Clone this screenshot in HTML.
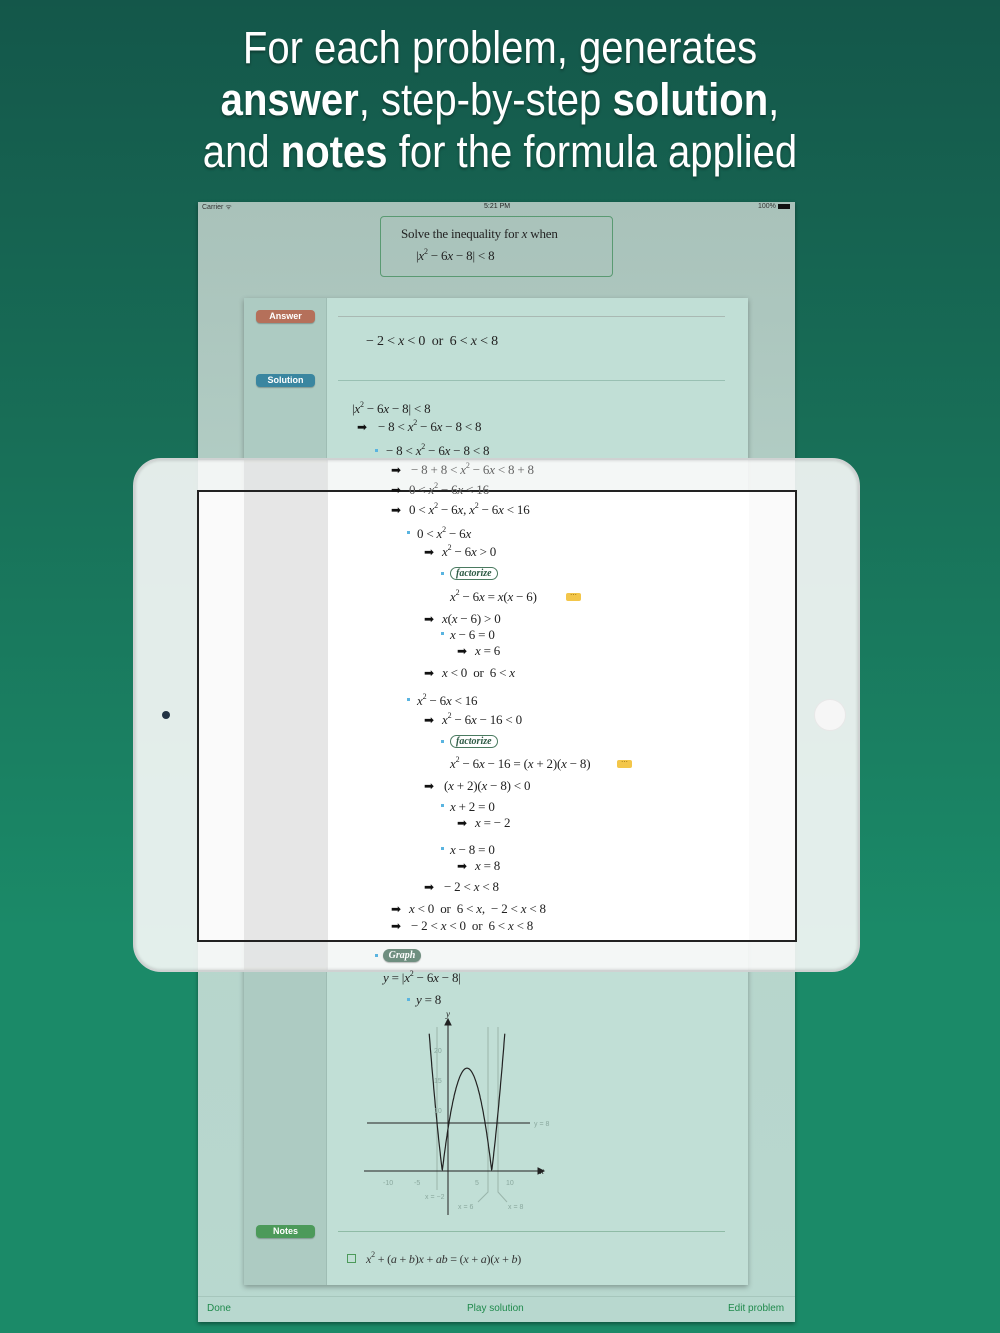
<!DOCTYPE html>
<html><head><meta charset="utf-8"><style>
*{margin:0;padding:0;box-sizing:border-box}
body{width:1000px;height:1333px;overflow:hidden;position:relative;background:linear-gradient(180deg,#14574a 0%,#187058 35%,#1b8a68 70%,#1b8a68 100%);font-family:"Liberation Serif",serif}
.h{position:absolute;left:0;width:1000px;text-align:center;color:#fff;font-family:"Liberation Sans",sans-serif;font-size:45px;line-height:52px;text-shadow:0 2px 3px rgba(0,0,0,.35);transform:scaleX(0.89);transform-origin:500px 0}
.h b{font-weight:bold}
.a{position:absolute;white-space:nowrap}
.t{position:absolute;white-space:nowrap;font-size:13px;color:#222;line-height:16px;letter-spacing:-0.2px}
.t i{font-style:italic}
.t sup{font-size:8px;vertical-align:6px;line-height:0}
.ar{position:absolute;font-size:12px;color:#111;line-height:16px}
.bu{position:absolute;width:3px;height:3px;background:#5ab4e0}
.pill{position:absolute;border-radius:4px;color:#fff;font-family:"Liberation Sans",sans-serif;font-weight:bold;font-size:9px;text-align:center;line-height:13px;box-shadow:0 1px 1px rgba(0,0,0,.25)}
.fac{position:absolute;height:13px;border:1px solid #4a7a60;border-radius:7px;font-style:italic;font-weight:bold;font-size:10px;color:#2d5a44;line-height:11px;padding:0 5px}
.dots{position:absolute;width:15px;height:8px;background:#f3c64a;border-radius:2px;font-size:7px;color:#7a5a00;text-align:center;line-height:5px}
.ui{font-family:"Liberation Sans",sans-serif}
</style></head><body>
<div class="h" style="top:22px">For each problem, generates</div>
<div class="h" style="top:74px"><b>answer</b>, step-by-step <b>solution</b>,</div>
<div class="h" style="top:126px">and <b>notes</b> for the formula applied</div>

<!-- screen -->
<div class="a" style="left:198px;top:202px;width:597px;height:1120px;background:linear-gradient(180deg,#a9c2ba 0%,#b6d3ca 40%,#b8d8cf 100%);box-shadow:0 2px 4px rgba(0,0,0,.4)"></div>
<div class="a ui" style="left:202px;top:203px;font-size:7px;color:#333">Carrier ᯤ</div>
<div class="a ui" style="left:484px;top:203px;font-size:7px;color:#222">5:21 PM</div>
<div class="a ui" style="left:758px;top:203px;font-size:7px;color:#333">100% <span style="display:inline-block;width:12px;height:5px;background:#111;vertical-align:middle"></span></div>
<div class="a" style="left:380px;top:216px;width:233px;height:61px;border:1px solid #5a9a72;border-radius:4px"></div>
<div class="t" style="left:401px;top:226px;font-size:13px">Solve the inequality for <i>x</i> when</div>
<div class="t" style="left:416px;top:248px;font-size:13px">|<i>x</i><sup>2</sup> − 6<i>x</i> − 8| &lt; 8</div>

<!-- card -->
<div class="a" style="left:244px;top:298px;width:504px;height:987px;background:#c1dfd6;box-shadow:0 2px 5px rgba(0,0,0,.3)"></div>
<div class="a" style="left:244px;top:298px;width:83px;height:987px;background:#adcbc2;border-right:1px solid #9fbdb4"></div>
<div class="pill" style="left:256px;top:310px;width:59px;background:#b5705a">Answer</div>
<div class="pill" style="left:256px;top:374px;width:59px;background:#3a86a0">Solution</div>
<div class="pill" style="left:256px;top:1225px;width:59px;background:#4c9a5a">Notes</div>
<div class="a" style="left:338px;top:316px;width:387px;height:1px;background:#a9b9b3"></div>
<div class="a" style="left:338px;top:380px;width:387px;height:1px;background:#99c0b3"></div>
<div class="a" style="left:338px;top:1231px;width:387px;height:1px;background:#8fbba6"></div>
<div class="t" style="left:366px;top:334px;font-size:14px">− 2 &lt; <i>x</i> &lt; 0 &nbsp;or &nbsp;6 &lt; <i>x</i> &lt; 8</div>
<div class="a" style="left:347px;top:1254px;width:9px;height:9px;border:1px solid #4c9a5a"></div>
<div class="t" style="left:366px;top:1251px;font-size:12px;color:#333"><i>x</i><sup>2</sup> + (<i>a</i> + <i>b</i>)<i>x</i> + <i>ab</i> = (<i>x</i> + <i>a</i>)(<i>x</i> + <i>b</i>)</div>
<div class="a" style="left:198px;top:1296px;width:597px;height:1px;background:#a6c6bc"></div>
<div class="a ui" style="left:207px;top:1303px;font-size:10px;color:#1f8a4c">Done</div>
<div class="a ui" style="left:467px;top:1303px;font-size:10px;color:#1f8a4c">Play solution</div>
<div class="a ui" style="left:728px;top:1303px;font-size:10px;color:#1f8a4c">Edit problem</div>

<!-- iPad overlay -->
<div class="a" style="left:133px;top:458px;width:727px;height:514px;border-radius:28px;background:rgba(250,250,250,.9);border:2px solid #cfd2d2;box-shadow:inset 0 0 3px rgba(0,0,0,.2)"></div>
<div class="a" style="left:244px;top:460px;width:84px;height:510px;background:rgba(200,200,200,.35)"></div>
<div class="a" style="left:197px;top:490px;width:600px;height:452px;background:#fff;border:2px solid #222"></div>
<div class="a" style="left:199px;top:492px;width:45px;height:448px;background:#fafafa"></div>
<div class="a" style="left:244px;top:492px;width:84px;height:448px;background:#e6e6e6"></div>
<div class="a" style="left:749px;top:492px;width:46px;height:448px;background:#fafafa"></div>
<div class="a" style="left:162px;top:711px;width:8px;height:8px;border-radius:50%;background:#223344"></div>
<div class="a" style="left:814px;top:699px;width:32px;height:32px;border-radius:50%;border:1px solid #e8e8e8;background:#f6f6f6"></div>

<!-- solution lines -->
<div class="t" style="left:352px;top:401px">|<i>x</i><sup>2</sup> − 6<i>x</i> − 8| &lt; 8</div>
<div class="ar" style="left:357px;top:419px">➡</div><div class="t" style="left:378px;top:419px">− 8 &lt; <i>x</i><sup>2</sup> − 6<i>x</i> − 8 &lt; 8</div>
<div class="bu" style="left:375px;top:449px"></div><div class="t" style="left:386px;top:443px">− 8 &lt; <i>x</i><sup>2</sup> − 6<i>x</i> − 8 &lt; 8</div>
<div class="ar" style="left:391px;top:462px">➡</div><div class="t" style="left:411px;top:462px;color:#666">− 8 + 8 &lt; <i>x</i><sup>2</sup> − 6<i>x</i> &lt; 8 + 8</div>
<div class="ar" style="left:391px;top:482px">➡</div><div class="t" style="left:409px;top:482px;color:#555">0 &lt; <i>x</i><sup>2</sup> − 6<i>x</i> &lt; 16</div>
<div class="ar" style="left:391px;top:502px">➡</div><div class="t" style="left:409px;top:502px">0 &lt; <i>x</i><sup>2</sup> − 6<i>x</i>, <i>x</i><sup>2</sup> − 6<i>x</i> &lt; 16</div>
<div class="bu" style="left:407px;top:531px"></div><div class="t" style="left:417px;top:526px">0 &lt; <i>x</i><sup>2</sup> − 6<i>x</i></div>
<div class="ar" style="left:424px;top:544px">➡</div><div class="t" style="left:442px;top:544px"><i>x</i><sup>2</sup> − 6<i>x</i> &gt; 0</div>
<div class="bu" style="left:441px;top:572px"></div><div class="fac" style="left:450px;top:567px">factorize</div>
<div class="t" style="left:450px;top:589px"><i>x</i><sup>2</sup> − 6<i>x</i> = <i>x</i>(<i>x</i> − 6)</div><div class="dots" style="left:566px;top:593px">···</div>
<div class="ar" style="left:424px;top:611px">➡</div><div class="t" style="left:442px;top:611px"><i>x</i>(<i>x</i> − 6) &gt; 0</div>
<div class="bu" style="left:441px;top:632px"></div><div class="t" style="left:450px;top:627px"><i>x</i> − 6 = 0</div>
<div class="ar" style="left:457px;top:643px">➡</div><div class="t" style="left:475px;top:643px"><i>x</i> = 6</div>
<div class="ar" style="left:424px;top:665px">➡</div><div class="t" style="left:442px;top:665px"><i>x</i> &lt; 0 &nbsp;or &nbsp;6 &lt; <i>x</i></div>
<div class="bu" style="left:407px;top:698px"></div><div class="t" style="left:417px;top:693px"><i>x</i><sup>2</sup> − 6<i>x</i> &lt; 16</div>
<div class="ar" style="left:424px;top:712px">➡</div><div class="t" style="left:442px;top:712px"><i>x</i><sup>2</sup> − 6<i>x</i> − 16 &lt; 0</div>
<div class="bu" style="left:441px;top:740px"></div><div class="fac" style="left:450px;top:735px">factorize</div>
<div class="t" style="left:450px;top:756px"><i>x</i><sup>2</sup> − 6<i>x</i> − 16 = (<i>x</i> + 2)(<i>x</i> − 8)</div><div class="dots" style="left:617px;top:760px">···</div>
<div class="ar" style="left:424px;top:778px">➡</div><div class="t" style="left:444px;top:778px">(<i>x</i> + 2)(<i>x</i> − 8) &lt; 0</div>
<div class="bu" style="left:441px;top:804px"></div><div class="t" style="left:450px;top:799px"><i>x</i> + 2 = 0</div>
<div class="ar" style="left:457px;top:815px">➡</div><div class="t" style="left:475px;top:815px"><i>x</i> = − 2</div>
<div class="bu" style="left:441px;top:847px"></div><div class="t" style="left:450px;top:842px"><i>x</i> − 8 = 0</div>
<div class="ar" style="left:457px;top:858px">➡</div><div class="t" style="left:475px;top:858px"><i>x</i> = 8</div>
<div class="ar" style="left:424px;top:879px">➡</div><div class="t" style="left:444px;top:879px">− 2 &lt; <i>x</i> &lt; 8</div>
<div class="ar" style="left:391px;top:901px">➡</div><div class="t" style="left:409px;top:901px"><i>x</i> &lt; 0 &nbsp;or &nbsp;6 &lt; <i>x</i>, &nbsp;− 2 &lt; <i>x</i> &lt; 8</div>
<div class="ar" style="left:391px;top:918px">➡</div><div class="t" style="left:411px;top:918px">− 2 &lt; <i>x</i> &lt; 0 &nbsp;or &nbsp;6 &lt; <i>x</i> &lt; 8</div>
<div class="bu" style="left:375px;top:954px"></div><div class="pill" style="left:383px;top:949px;width:38px;background:#6f8f80;border-radius:7px;font-style:italic;font-family:'Liberation Serif',serif;font-size:10px">Graph</div>
<div class="t" style="left:383px;top:970px"><i>y</i> = |<i>x</i><sup>2</sup> − 6<i>x</i> − 8|</div>
<div class="bu" style="left:407px;top:998px"></div><div class="t" style="left:416px;top:992px"><i>y</i> = 8</div>

<svg class="a" style="left:0;top:0" width="1000" height="1333">
<g stroke="#9ab5ab" stroke-width="1" fill="none">
<line x1="437" y1="1027" x2="437" y2="1190"/><line x1="488" y1="1027" x2="488" y2="1188"/><line x1="498" y1="1027" x2="498" y2="1188"/>
<polyline points="488,1188 488,1192 478,1202"/><polyline points="498,1188 498,1192 507,1202"/>
</g>
<g stroke="#222" stroke-width="1" fill="none">
<line x1="364" y1="1171" x2="538" y2="1171"/><polygon points="538,1168 544,1171 538,1174" fill="#222"/>
<line x1="448" y1="1215" x2="448" y2="1024"/><polygon points="445,1025 448,1019 451,1025" fill="#222"/>
<line x1="367" y1="1123" x2="530" y2="1123"/>
<path id="cv" stroke-width="1.2" d=""/>
</g>
<g font-family="Liberation Sans" font-size="7" fill="#8aa89e">
<text x="383" y="1185">-10</text><text x="414" y="1185">-5</text><text x="475" y="1185">5</text><text x="506" y="1185">10</text>
<text x="434" y="1053">20</text><text x="434" y="1083">15</text><text x="434" y="1113">10</text>
<text x="534" y="1126">y = 8</text><text x="425" y="1199">x = −2</text><text x="458" y="1209">x = 6</text><text x="508" y="1209">x = 8</text>
</g>
<text x="540" y="1174" font-size="9" font-style="italic" fill="#222">x</text>
<text x="446" y="1017" font-size="9" font-style="italic" fill="#222">y</text>
</svg>
<script>
var d="";for(var i=0;i<=200;i++){var x=-3.3+i*12.6/200;var y=Math.abs(x*x-6*x-8);var px=449+x*6,py=1171-y*6.05;if(py<1027)continue;d+=(d?"L":"M")+px.toFixed(1)+","+py.toFixed(1);}
document.getElementById("cv").setAttribute("d",d);
</script>
</body></html>
